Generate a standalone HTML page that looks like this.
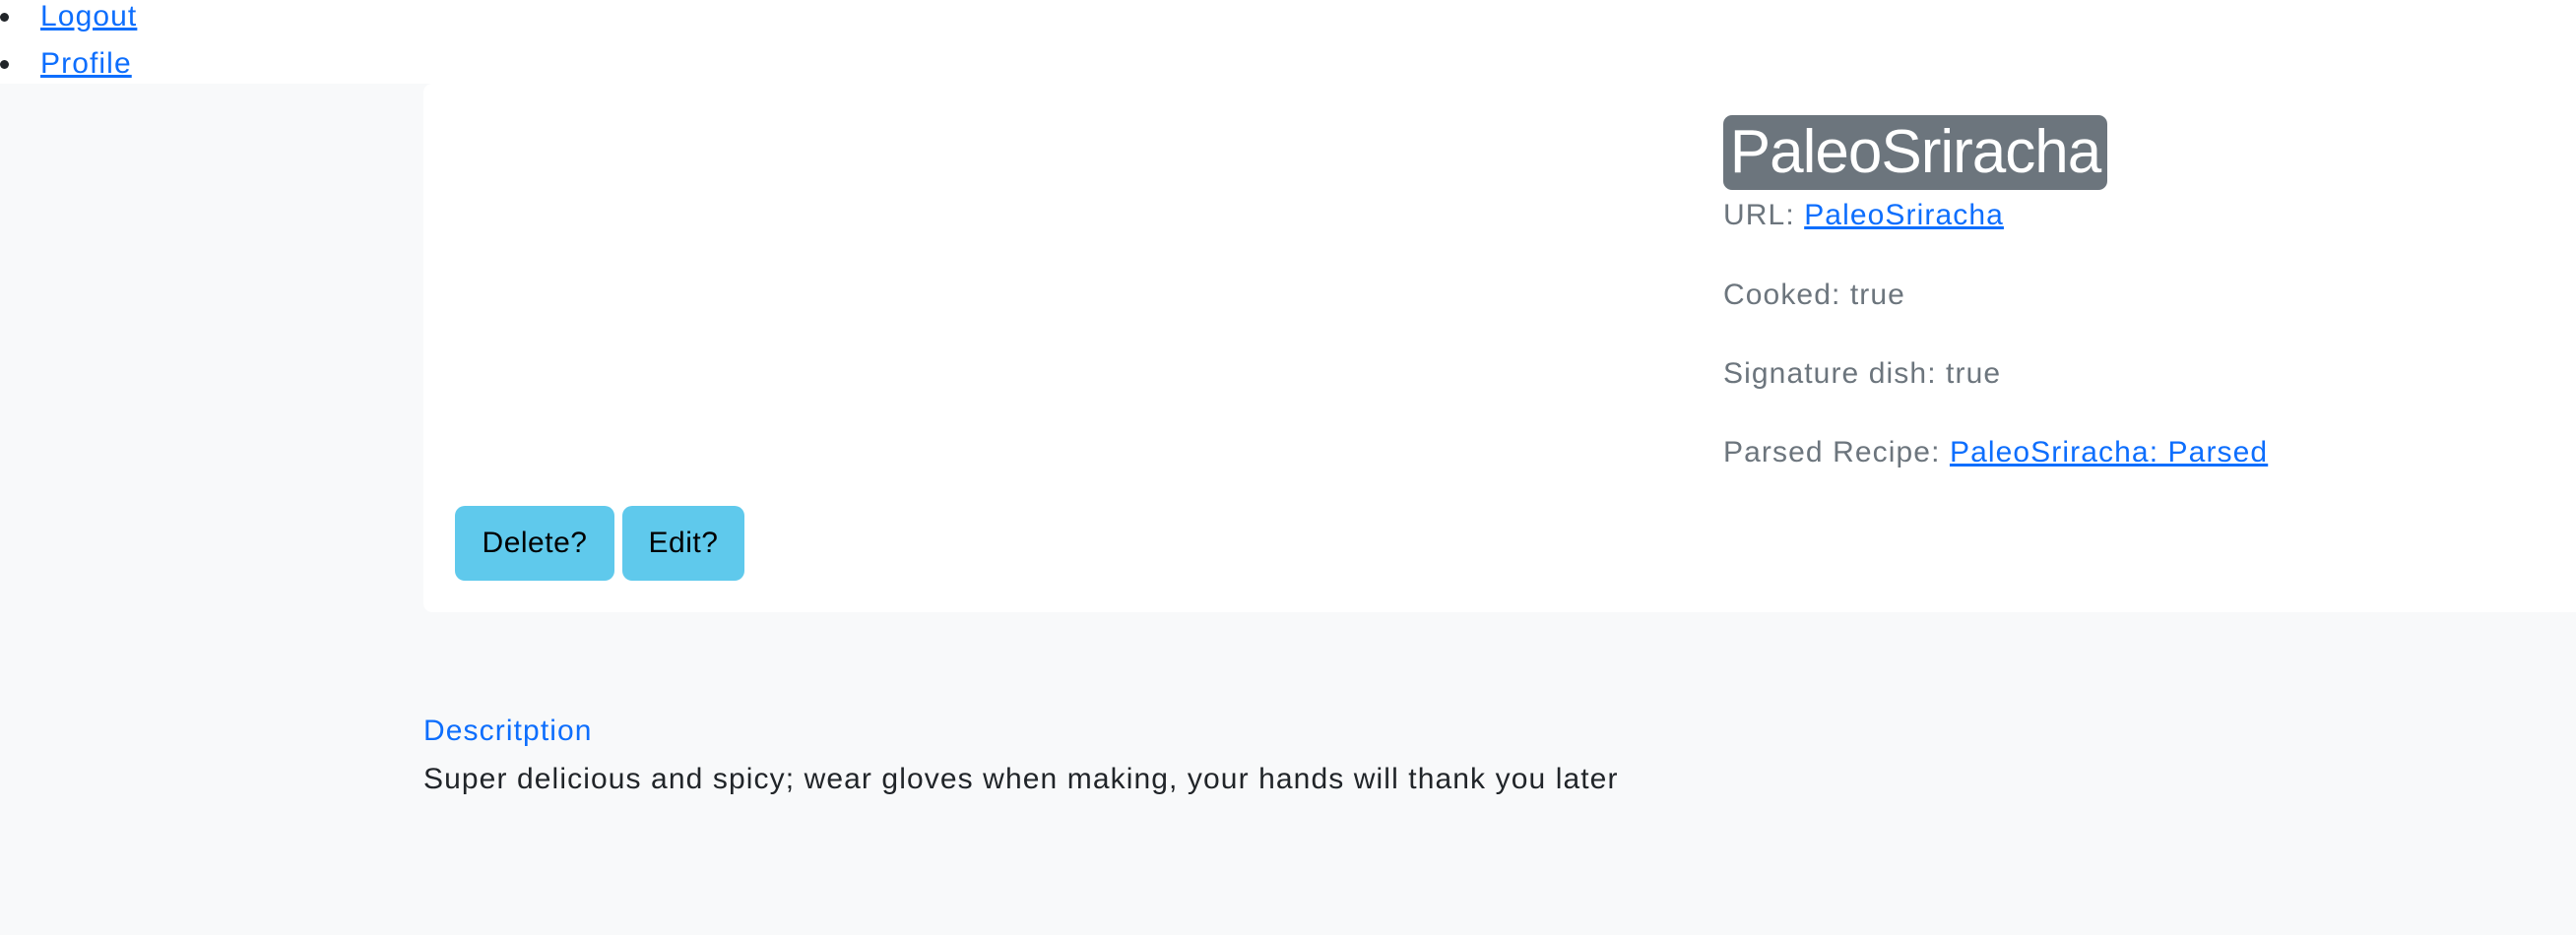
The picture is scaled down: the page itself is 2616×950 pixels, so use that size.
<!DOCTYPE html>
<html><head><meta charset="utf-8"><style>
html,body{margin:0;padding:0;width:2616px;height:950px;overflow:hidden;background:#f8f9fa;font-family:"Liberation Sans",Arial,sans-serif;font-size:30px;letter-spacing:1.1px;color:#212529}
.top{position:absolute;left:0;top:0;width:2616px;height:85px;background:#fff}
ul{margin:0;padding:0 0 0 41px;position:absolute;top:-7px;left:0}
li{line-height:48px;height:48px;position:relative;list-style:none}
li:before{content:"";position:absolute;left:-41px;top:20px;width:9px;height:9px;border-radius:50%;background:#212529}
a{color:#0d6efd;text-decoration:underline}
.card{position:absolute;left:430px;top:85px;right:0;height:537px;background:#fff;border-radius:9px 0 0 9px}
.badge{position:absolute;left:1750px;top:117px;width:390px;height:76px;background:#6c757d;color:#fff;border-radius:9px;font-size:62px;line-height:76px;text-align:center;letter-spacing:-1px}
.t{position:absolute;left:1750px;color:#6c757d;line-height:40px;white-space:nowrap}
.btn{position:absolute;top:514px;height:76px;background:#5fc9ec;border-radius:10px;color:#000;line-height:76px;text-align:center;letter-spacing:0.5px}
</style></head><body>
<div class="top"></div>
<ul><li><a>Logout</a></li><li><a>Profile</a></li></ul>
<div class="card"></div>
<div class="badge">PaleoSriracha</div>
<div class="t" style="top:199px">URL: <a>PaleoSriracha</a></div>
<div class="t" style="top:280px">Cooked: true</div>
<div class="t" style="top:360px">Signature dish: true</div>
<div class="t" style="top:440px">Parsed Recipe: <a>PaleoSriracha: Parsed</a></div>
<div class="btn" style="left:462px;width:162px">Delete?</div>
<div class="btn" style="left:632px;width:124px">Edit?</div>
<div style="position:absolute;left:430px;top:723px;line-height:40px;color:#0d6efd">Descritption</div>
<div style="position:absolute;left:430px;top:772px;line-height:40px;color:#212529;white-space:nowrap">Super delicious and spicy; wear gloves when making, your hands will thank you later</div>
</body></html>
